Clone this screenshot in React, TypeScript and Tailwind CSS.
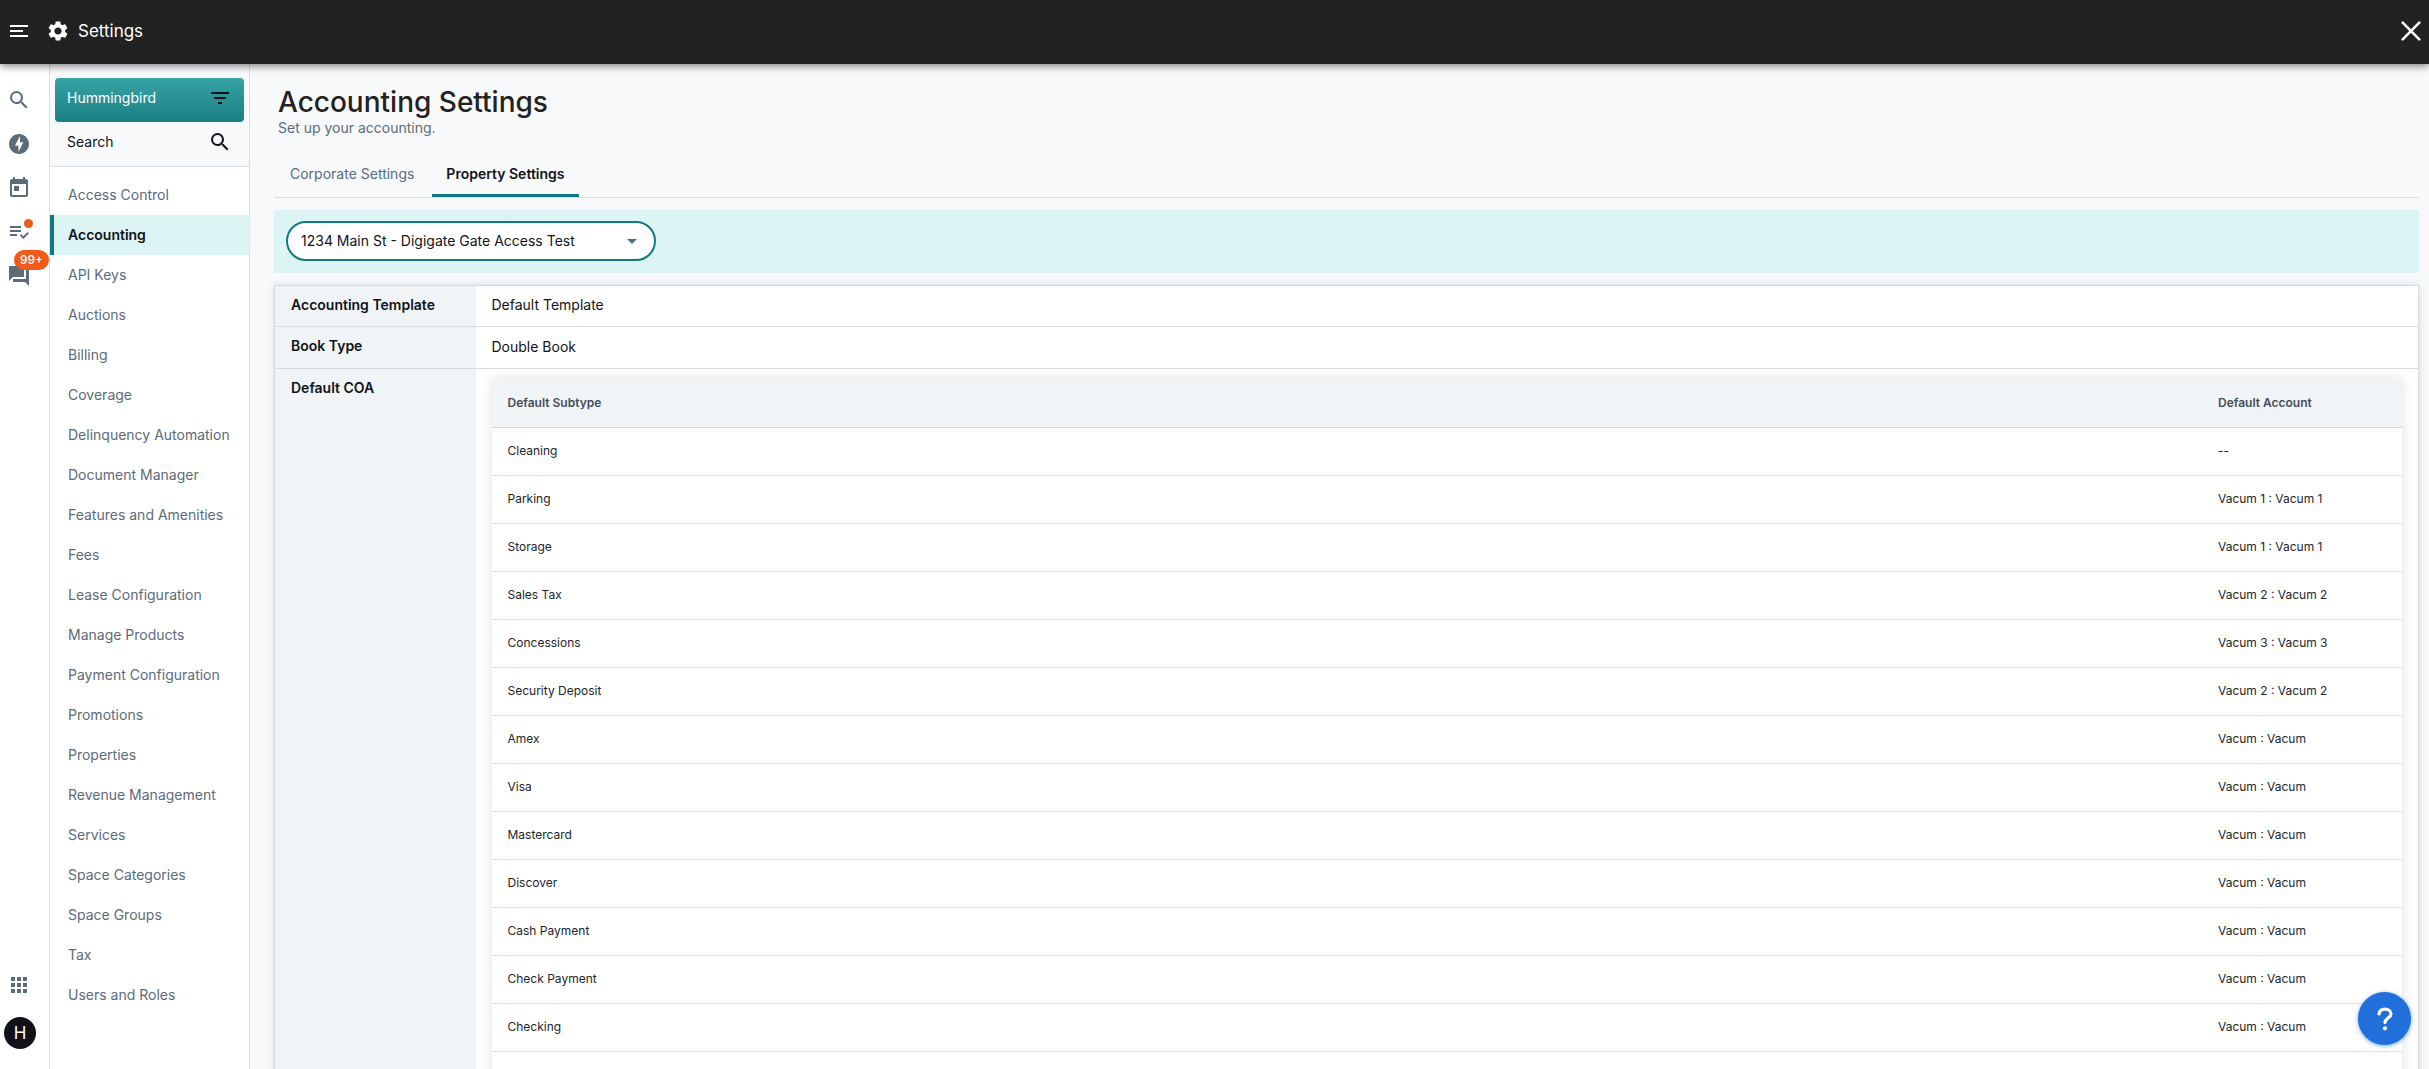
import { useState } from "react";
import {
  MdApps,
  MdArrowDropDown,
  MdFilterList,
  MdForum,
  MdOfflineBolt,
  MdPlaylistAddCheck,
  MdSearch,
  MdSettings,
  MdToday,
} from "react-icons/md";

const navItems = [
  "Access Control",
  "Accounting",
  "API Keys",
  "Auctions",
  "Billing",
  "Coverage",
  "Delinquency Automation",
  "Document Manager",
  "Features and Amenities",
  "Fees",
  "Lease Configuration",
  "Manage Products",
  "Payment Configuration",
  "Promotions",
  "Properties",
  "Revenue Management",
  "Services",
  "Space Categories",
  "Space Groups",
  "Tax",
  "Users and Roles",
];

const accounts = [
  { subtype: "Cleaning", account: "--" },
  { subtype: "Parking", account: "Vacum 1 : Vacum 1" },
  { subtype: "Storage", account: "Vacum 1 : Vacum 1" },
  { subtype: "Sales Tax", account: "Vacum 2 : Vacum 2" },
  { subtype: "Concessions", account: "Vacum 3 : Vacum 3" },
  { subtype: "Security Deposit", account: "Vacum 2 : Vacum 2" },
  { subtype: "Amex", account: "Vacum : Vacum" },
  { subtype: "Visa", account: "Vacum : Vacum" },
  { subtype: "Mastercard", account: "Vacum : Vacum" },
  { subtype: "Discover", account: "Vacum : Vacum" },
  { subtype: "Cash Payment", account: "Vacum : Vacum" },
  { subtype: "Check Payment", account: "Vacum : Vacum" },
  { subtype: "Checking", account: "Vacum : Vacum" },
];

function Header() {
  return (
    <header className="relative z-20 flex h-16 shrink-0 items-center bg-[#222222] pb-0.5 pl-2.5 pr-2 text-white shadow-[0_2px_8px_rgba(0,0,0,0.5)]">
      <button type="button" aria-label="Menu" className="mr-[18px]">
        <svg width="18" height="12" viewBox="0 0 18 12" fill="currentColor">
          <path d="M0 0h18v2H0zM0 5h13v2H0zM0 10h18v2H0z" />
        </svg>
      </button>
      <MdSettings className="mr-2 size-6" />
      <span className="text-[17px]">Settings</span>
      <button type="button" aria-label="Close" className="ml-auto">
        <svg width="20" height="20" viewBox="0 0 20 20" fill="none" stroke="currentColor" strokeWidth="2.6" strokeLinecap="round">
          <path d="M1.7 1.7l16.6 16.6M18.3 1.7L1.7 18.3" />
        </svg>
      </button>
    </header>
  );
}

function IconRail() {
  return (
    <aside className="relative z-10 flex w-[50px] shrink-0 flex-col border-r border-[#dce0e3] bg-white pl-[7px] text-[#5b6b7a]">
      <div className="flex flex-col gap-5 pt-6">
        <button type="button" aria-label="Search" className="size-6">
          <MdSearch className="size-6" />
        </button>
        <button type="button" aria-label="Quick actions" className="size-6">
          <MdOfflineBolt className="size-6" />
        </button>
        <button type="button" aria-label="Calendar" className="size-6">
          <MdToday className="size-6" />
        </button>
        <button type="button" aria-label="Tasks" className="relative size-6">
          <MdPlaylistAddCheck className="size-6" />
          <span className="absolute -top-px left-[17px] size-[9px] rounded-full bg-[#f05a1a]" />
        </button>
        <button type="button" aria-label="Messages" className="relative size-6">
          <MdForum className="size-6" />
          <span className="absolute -top-3.5 left-[7px] rounded-full bg-[#f05a1a] px-1.5 text-xs leading-5 font-medium text-white">
            99+
          </span>
        </button>
      </div>
      <button type="button" aria-label="Apps" className="mt-auto size-6">
        <MdApps className="size-6" />
      </button>
      <button
        type="button"
        aria-label="Account"
        className="mt-5 mb-5 -ml-[3px] size-8 rounded-full bg-[#111217] text-[17px] text-white"
      >
        H
      </button>
    </aside>
  );
}

function SettingsNav() {
  return (
    <aside className="w-[200px] shrink-0 border-r border-[#dce0e3] bg-white">
      <div className="border-b border-[#d5dbe0] bg-[#f8f9fb] px-[5px] pt-3.5">
        <button
          type="button"
          className="flex h-11 w-full items-center justify-between rounded bg-linear-to-b from-[#36a3a5] to-[#1b8086] px-3 pb-1 text-white"
        >
          Hummingbird
          <MdFilterList className="size-6 text-[#101318]" />
        </button>
        <label className="flex h-11 items-center px-3 pb-1">
          <input
            type="text"
            aria-label="Search settings"
            placeholder="Search"
            className="w-0 grow outline-none placeholder:text-[#101318]"
          />
          <MdSearch className="size-6 text-[#101318]" />
        </label>
      </div>
      <nav className="pt-2">
        {navItems.map((item) => (
          <a
            key={item}
            href="#"
            className={
              item === "Accounting"
                ? "flex h-10 items-center border-l-4 border-[#0f7b80] bg-[#dcf4f4] pl-3.5 font-semibold text-[#101318]"
                : "flex h-10 items-center border-l-4 border-transparent pl-3.5 text-[#5b6b7a]"
            }
          >
            {item}
          </a>
        ))}
      </nav>
    </aside>
  );
}

function CoaTable() {
  return (
    <div className="bg-white pb-24 shadow-[0_0_12px_rgba(30,50,70,0.14)]">
      <table className="w-full border-collapse text-left text-xs text-[#22252b]">
        <thead>
          <tr className="h-12 border-b border-[#d3d7da] bg-[#f0f4f7] text-[#474c57]">
            <th className="px-4 font-semibold">Default Subtype</th>
            <th className="w-[200px] px-4 font-semibold">Default Account</th>
          </tr>
        </thead>
        <tbody>
          {accounts.map(({ subtype, account }) => (
            <tr key={subtype} className="h-12 border-b border-[#dcdee0]">
              <td className="px-4">{subtype}</td>
              <td className="px-4">{account}</td>
            </tr>
          ))}
        </tbody>
      </table>
    </div>
  );
}

function App() {
  const [property, setProperty] = useState("1234 Main St - Digigate Gate Access Test");

  return (
    <div className="flex h-screen flex-col overflow-hidden bg-[#f8f9fb] font-['Inter',sans-serif] text-sm text-[#101318]">
      <Header />
      <div className="flex min-h-0 grow">
        <IconRail />
        <SettingsNav />
        <main className="min-w-0 grow overflow-y-auto pl-6 pr-2.5 pt-[22px] [scrollbar-width:none]">
          <div className="pl-1">
            <h1 className="text-[28px] leading-8 font-medium text-[#222222]">Accounting Settings</h1>
            <p className="leading-5 text-[#5b6b7a]">Set up your accounting.</p>
          </div>

          <div role="tablist" className="mt-3.5 flex h-[46px] border-b border-[#d9dcdf]">
            <button
              type="button"
              role="tab"
              aria-selected="false"
              className="border-b-3 border-transparent pt-0.5 pl-4 pr-[18px] text-[#5b6b7a]"
            >
              Corporate Settings
            </button>
            <button
              type="button"
              role="tab"
              aria-selected="true"
              className="border-b-3 border-[#0f7b80] px-3.5 pt-0.5 font-semibold"
            >
              Property Settings
            </button>
          </div>

          <div className="mt-3 bg-[#dcf4f4] px-3 pt-[11px] pb-3">
            <div className="relative w-[370px]">
              <select
                aria-label="Property"
                value={property}
                onChange={(e) => setProperty(e.target.value)}
                className="h-10 w-full appearance-none rounded-full border-2 border-[#0f7b80] bg-white pl-[13px] pr-10 outline-none"
              >
                <option>1234 Main St - Digigate Gate Access Test</option>
              </select>
              <MdArrowDropDown className="pointer-events-none absolute top-2 right-3 size-6 text-[#5b6b7a]" />
            </div>
          </div>

          <table className="mt-3 w-full border-collapse border border-[#d9dcdf] bg-white text-left shadow-[0_0_8px_rgba(30,50,70,0.14)]">
            <tbody>
              <tr className="border-b border-[#d9dcdf] align-top">
                <th className="w-[201px] bg-[#f0f4f7] px-4 pt-[9px] pb-[11px] leading-5 font-semibold">
                  Accounting Template
                </th>
                <td className="px-4 pt-[9px] pb-[11px] leading-5">Default Template</td>
              </tr>
              <tr className="border-b border-[#d9dcdf] align-top">
                <th className="bg-[#f0f4f7] px-4 pt-[9px] pb-[11px] leading-5 font-semibold">Book Type</th>
                <td className="px-4 pt-2.5 pb-[11px] leading-5">Double Book</td>
              </tr>
              <tr className="align-top">
                <th className="bg-[#f0f4f7] px-4 pt-[9px] leading-5 font-semibold">Default COA</th>
                <td className="px-4 py-2.5">
                  <CoaTable />
                </td>
              </tr>
            </tbody>
          </table>
        </main>
      </div>

      <button
        type="button"
        aria-label="Help"
        className="fixed right-[18px] bottom-6 z-30 flex size-[53px] items-center justify-center rounded-full bg-[#216fdb] text-white shadow-[0_1px_4px_rgba(33,111,219,0.6)]"
      >
        <svg width="16" height="24" viewBox="0 0 16 24" fill="none" stroke="currentColor" strokeWidth="3.2" strokeLinecap="round" strokeLinejoin="round">
          <path d="M2 7C2.400 4 4.800 2.200 8 2.200s6 2 6 4.800c0 4-6 4.200-6 8.600" />
          <circle cx="8" cy="21.300" r="2.100" fill="currentColor" stroke="none" />
        </svg>
      </button>
    </div>
  );
}

export default App;
